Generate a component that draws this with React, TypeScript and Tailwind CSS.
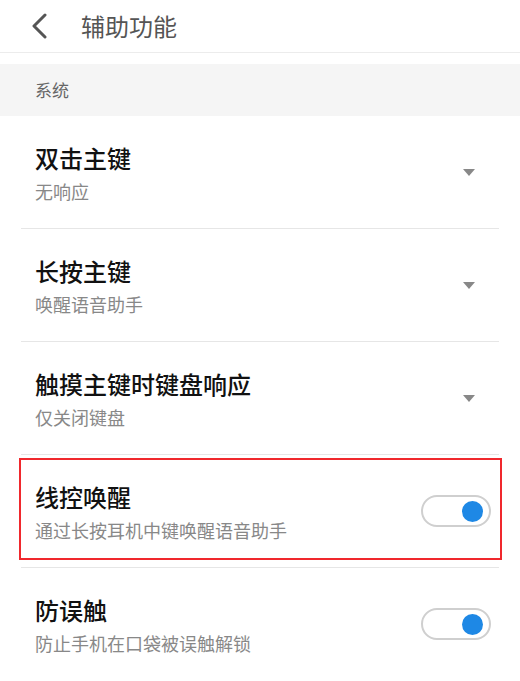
const font = { fontFamily: '"Noto Sans CJK SC", "Noto Sans", sans-serif' };

interface SettingItem {
  title: string;
  desc: string;
  kind: 'select' | 'toggle';
  highlight?: boolean;
}

const items: SettingItem[] = [
  { title: '双击主键', desc: '无响应', kind: 'select' },
  { title: '长按主键', desc: '唤醒语音助手', kind: 'select' },
  { title: '触摸主键时键盘响应', desc: '仅关闭键盘', kind: 'select' },
  { title: '线控唤醒', desc: '通过长按耳机中键唤醒语音助手', kind: 'toggle', highlight: true },
  { title: '防误触', desc: '防止手机在口袋被误触解锁', kind: 'toggle' },
];

export default function App() {
  return (
    <div className="w-[520px] h-[681px] overflow-hidden bg-white" style={font}>
      <header className="flex items-center h-[53px] border-b border-[#ececec]">
        <button className="ml-[31px] w-[20px] flex items-center" aria-label="Back">
          <svg width="18" height="26" viewBox="0 0 18 26" fill="none">
            <polyline
              points="14,2 3,13 14,24"
              stroke="#555"
              strokeWidth="3"
              strokeLinecap="round"
              strokeLinejoin="round"
            />
          </svg>
        </button>
        <h1 className="ml-[30px] text-[24px] leading-[32px] text-[#555]">辅助功能</h1>
      </header>

      <div className="mt-[11px] h-[52px] bg-[#f5f5f5] flex items-center pl-[35px]">
        <span className="text-[17px] text-[#666]">系统</span>
      </div>

      <div>
        {items.map((item, i) => (
          <SettingRow key={item.title} item={item} last={i === items.length - 1} />
        ))}
      </div>
    </div>
  );
}

function SettingRow({ item, last }: { item: SettingItem; last: boolean }) {
  return (
    <div className="relative">
      <div className="flex items-center h-[112px] pl-[35px] pr-[29px]">
        <div className="flex-1 mt-[6px]">
          <div className="text-[24px] leading-[32px] font-medium text-[#111]">{item.title}</div>
          <div className="text-[18px] leading-[34px] text-[#888]">{item.desc}</div>
        </div>
        {item.kind === 'select' ? (
          <div className="mr-[16px] w-0 h-0 border-l-[6px] border-r-[6px] border-t-[7px] border-l-transparent border-r-transparent border-t-[#888]" />
        ) : (
          <Toggle />
        )}
      </div>
      {!last && <div className="mx-[21px] h-px bg-[#e6e6e6]" />}
      {item.highlight && (
        <div className="absolute left-[19px] right-[18px] top-[3px] bottom-[8px] border-2 border-[#f0282d] pointer-events-none" />
      )}
    </div>
  );
}

function Toggle() {
  return (
    <div className="w-[70px] h-[32px] rounded-full border-[2.5px] border-[#cfcfcf] bg-white flex items-center justify-end pr-[6px]">
      <div className="w-[21px] h-[21px] rounded-full bg-[#1e88e5]" />
    </div>
  );
}
